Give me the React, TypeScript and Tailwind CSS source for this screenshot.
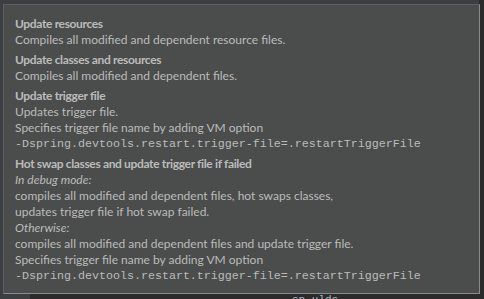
import React from "react";

const sans = "font-['Lato',sans-serif]";
const mono = "font-['Liberation_Mono',monospace]";

function Heading({ children }: { children: React.ReactNode }) {
  return <div className="font-bold h-4 leading-4 tracking-[-0.35px]">{children}</div>;
}

function Line({ children, italic }: { children: React.ReactNode; italic?: boolean }) {
  return <div className={`h-4 leading-4 ${italic ? "italic" : ""}`}>{children}</div>;
}

function Flag() {
  return (
    <div className={`${mono} h-4 leading-4 text-[11.67px] whitespace-pre`}>
      -Dspring.devtools.restart.trigger-file=.restartTriggerFile
    </div>
  );
}

export default function App() {
  return (
    <div className="relative w-[484px] h-[299px] overflow-hidden bg-[#3c3f41]">
      {/* editor behind the popup */}
      <div className="absolute right-0 top-0 w-[5px] h-full bg-[#2b2b2b]" />
      <div className="absolute left-[30px] bottom-0 w-[454px] h-[6px] bg-[#2b2b2b]" />
      <div className={`absolute left-[292px] top-[294px] ${mono} text-[11px] leading-[12px] text-[#a9b7c6]`}>
        sp_ulds
      </div>

      {/* tooltip */}
      <div
        className={`absolute left-[3px] top-[4px] w-[477px] h-[290px] bg-[#4b4d4d] border border-[#5e6060] border-r-[#8a8a8a] border-b-[#8a8a8a] ${sans} text-[12px] text-[#bbbbbb] pl-[11px] pt-[11px]`}
      >
        <div className="flex flex-col gap-[4px]">
          <div>
            <Heading>Update resources</Heading>
            <Line>Compiles all modified and dependent resource files.</Line>
          </div>
          <div>
            <Heading>Update classes and resources</Heading>
            <Line>Compiles all modified and dependent files.</Line>
          </div>
          <div>
            <Heading>Update trigger file</Heading>
            <Line>Updates trigger file.</Line>
            <Line>Specifies trigger file name by adding VM option</Line>
            <Flag />
          </div>
          <div>
            <Heading>Hot swap classes and update trigger file if failed</Heading>
            <Line italic>In debug mode:</Line>
            <Line>compiles all modified and dependent files, hot swaps classes,</Line>
            <Line>updates trigger file if hot swap failed.</Line>
            <Line italic>Otherwise:</Line>
            <Line>compiles all modified and dependent files and update trigger file.</Line>
            <Line>Specifies trigger file name by adding VM option</Line>
            <Flag />
          </div>
        </div>
      </div>
    </div>
  );
}
